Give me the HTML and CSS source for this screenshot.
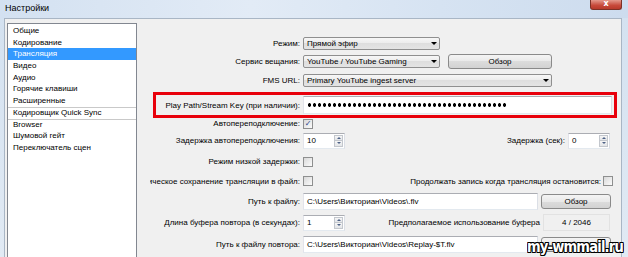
FILE: index.html
```html
<!DOCTYPE html>
<html lang="ru">
<head>
  <meta charset="UTF-8">
  <title>Настройки</title>
  <link rel="stylesheet" href="styles.css">
</head>
<body>
  <div class="window">
    <div class="titlebar">
      <span class="title">Настройки</span>
      <div class="close">x</div>
    </div>

    <div class="frame">
      <ul class="nav">
        <li>Общие</li>
        <li>Кодирование</li>
        <li class="active">Трансляция</li>
        <li>Видео</li>
        <li>Аудио</li>
        <li>Горячие клавиши</li>
        <li>Расширенные</li>
        <li class="sep">Кодировщик Quick Sync</li>
        <li class="sep">Browser</li>
        <li>Шумовой гейт</li>
        <li>Переключатель сцен</li>
      </ul>

      <div class="panel">
        <div class="row r1">
          <div class="lbl">Режим:</div>
          <div class="select s-short">Прямой эфир</div>
        </div>
        <div class="row r2">
          <div class="lbl">Сервис вещания:</div>
          <div class="select s-short">YouTube / YouTube Gaming</div>
          <div class="btn btn-wide">Обзор</div>
        </div>
        <div class="row r3">
          <div class="lbl">FMS URL:</div>
          <div class="select s-long">Primary YouTube ingest server</div>
        </div>
        <div class="row r4">
          <div class="keybox">
            <div class="lbl">Play Path/Stream Key (при наличии):</div>
            <div class="field key"><span class="dots"></span></div>
          </div>
        </div>
        <div class="row r5">
          <div class="lbl">Автопереподключение:</div>
          <div class="check checked">✓</div>
        </div>
        <div class="row r6">
          <div class="lbl">Задержка автопереподключения:</div>
          <div class="spin"><span class="val">10</span><span class="arrows"><i class="up"></i><i class="down"></i></span></div>
          <div class="fill">Задержка (сек):</div>
          <div class="spin spin-right"><span class="val">0</span><span class="arrows"><i class="up"></i><i class="down"></i></span></div>
        </div>
        <div class="row r7">
          <div class="lbl">Режим низкой задержки:</div>
          <div class="check"></div>
        </div>
        <div class="row r8">
          <div class="lbl lbl-cut">Автоматическое сохранение трансляции в файл:</div>
          <div class="check"></div>
          <div class="fill">Продолжать запись когда трансляция остановится:</div>
          <div class="check check-right"></div>
        </div>
        <div class="row r9">
          <div class="lbl">Путь к файлу:</div>
          <div class="field path">C:\Users\Викториан\Videos\.flv</div>
          <div class="btn btn-small">Обзор</div>
        </div>
        <div class="row r10">
          <div class="lbl">Длина буфера повтора (в секундах):</div>
          <div class="spin"><span class="val">1</span><span class="arrows"><i class="up"></i><i class="down"></i></span></div>
          <div class="fill">Предполагаемое использование буфера</div>
          <div class="usage">4 / 2046</div>
        </div>
        <div class="row r11">
          <div class="lbl">Путь к файлу повтора:</div>
          <div class="field path">C:\Users\Викториан\Videos\Replay-$T.flv</div>
          <div class="btn btn-small">Обзор</div>
        </div>
      </div>
    </div>

    <div class="watermark">my-wmmail.ru</div>
  </div>
</body>
</html>
```

FILE: styles.css
```css
body {
  margin: 0;
  font-family: "Liberation Sans", Arial, sans-serif;
  font-size: 8px;
  color: #000;
}

.window {
  position: relative;
  width: 628px;
  height: 257px;
  overflow: hidden;
  background: linear-gradient(#d3e1f0, #e1eaf4);
}

/* заголовок окна */
.titlebar {
  height: 18px;
  display: flex;
  justify-content: space-between;
  padding-left: 5px;
  background: linear-gradient(90deg, #d3e1f1, #e2ebf6 40%, #d6e3f2 70%, #cddcee);
}

.title {
  font-size: 9px;
  line-height: 16px;
}

.close {
  width: 32px;
  height: 10px;
  margin-right: 6px;
  box-sizing: border-box;
  border: 1px solid #7d3126;
  border-top: none;
  border-radius: 0 0 3px 3px;
  background: linear-gradient(#e4998c, #c7493a 60%, #b83a2b);
  color: #fff;
  font: bold 8px "DejaVu Sans", sans-serif;
  text-align: center;
  line-height: 8px;
}

.frame {
  display: flex;
  height: 239px;
  margin: 0 6px 0 4px;
  border: 1px solid #a9b6c5;
  border-bottom: none;
  background: #f0f0f0;
}

/* список разделов */
.nav {
  list-style: none;
  margin: 4px 0 0 2px;
  padding: 1px 0 0;
  width: 130px;
  box-sizing: border-box;
  border: 1px solid #828790;
  border-bottom: none;
  background: #fff;
}

.nav li {
  height: 11.7px;
  line-height: 11.7px;
  padding-left: 5px;
  box-sizing: border-box;
  white-space: nowrap;
}

.nav li.active {
  background: #3399ff;
  color: #fff;
}

.nav li.sep {
  border-top: 1px solid #c9c9c9;
  line-height: 10.7px;
}

/* правая часть */
.panel {
  flex: 1;
  display: flex;
  flex-direction: column;
  padding: 15px 0 0 11px;
}

.row {
  display: flex;
  align-items: center;
}

.r1 { height: 18px; }
.r2 { height: 19px; }
.r3 { height: 19px; }
.r4 { height: 28px; align-items: flex-start; }
.r5 { height: 11px; }
.r6 { height: 23px; }
.r7 { height: 19px; }
.r8 { height: 20px; }
.r9 { height: 21px; }
.r10 { height: 21px; }
.r11 { height: 22px; }

.lbl {
  width: 152px;
  flex-shrink: 0;
  display: flex;
  justify-content: flex-end;
  overflow: hidden;
  white-space: nowrap;
  margin-right: 3px;
}

.lbl-cut {
  width: 150px;
  margin-left: 2px;
}

.select {
  height: 13px;
  box-sizing: border-box;
  border: 1px solid #8f8f8f;
  border-radius: 2px;
  background: linear-gradient(#f7f7f7, #ebebeb 50%, #dedede 50%, #e4e4e4);
  padding-left: 3px;
  display: flex;
  align-items: center;
  justify-content: space-between;
  white-space: nowrap;
}

.select::after {
  content: "";
  border-left: 3px solid transparent;
  border-right: 3px solid transparent;
  border-top: 3px solid #000;
  margin-right: 2px;
}

.s-short { width: 137px; }
.s-long { width: 249px; }

.btn {
  height: 15px;
  box-sizing: border-box;
  border: 1px solid #8a8a8a;
  border-radius: 3px;
  background: linear-gradient(#f4f4f4, #e9e9e9 50%, #dcdcdc 50%, #d2d2d2);
  display: flex;
  align-items: center;
  justify-content: center;
}

.btn-wide {
  width: 104px;
  margin-left: 8px;
}

.btn-small {
  width: 70px;
  margin-left: 3px;
}

.field {
  height: 17px;
  box-sizing: border-box;
  border: 1px solid #abadb3;
  border-color: #abadb3 #dbdfe6 #e3e9ef #e2e3ea;
  background: #fff;
  padding-left: 3px;
  display: flex;
  align-items: center;
  white-space: nowrap;
}

.path { width: 235px; }

.keybox {
  margin: 2px 0 0 5px;
  width: 464px;
  height: 26px;
  box-sizing: border-box;
  border: 3px solid #e8000b;
  display: flex;
  align-items: center;
}

.keybox .lbl { width: 144px; }

.key {
  width: 309px;
  height: 18px;
}

.dots {
  width: 201px;
  height: 4px;
  background: radial-gradient(circle, #000 1.5px, transparent 2px) 0 0 / 5px 4px repeat-x;
}

.check {
  width: 10px;
  height: 10px;
  flex-shrink: 0;
  box-sizing: border-box;
  border: 1px solid #8e8f8f;
  background: linear-gradient(135deg, #d9d9d9, #fbfbfb);
  color: #27468a;
  font: bold 8px "DejaVu Sans", sans-serif;
  line-height: 8px;
  text-align: center;
}

.check-right { margin: 0 8px 0 2px; }

.spin {
  width: 42px;
  height: 16px;
  flex-shrink: 0;
  box-sizing: border-box;
  border: 1px solid #abadb3;
  border-color: #abadb3 #dbdfe6 #e3e9ef #e2e3ea;
  background: #fff;
  display: flex;
}

.spin .val {
  flex: 1;
  padding-left: 3px;
  line-height: 14px;
}

.spin .arrows {
  width: 9px;
  margin: 1px 1px 1px 0;
  display: flex;
  flex-direction: column;
}

.spin i {
  flex: 1;
  border: 1px solid #c3c7cd;
  background: linear-gradient(#f6f6f6, #e3e5e8);
  display: flex;
  align-items: center;
  justify-content: center;
}

.spin i + i { border-top: none; }

.spin i::after {
  content: "";
  border-left: 2px solid transparent;
  border-right: 2px solid transparent;
}

.spin .up::after { border-bottom: 2px solid #4d6185; }
.spin .down::after { border-top: 2px solid #4d6185; }

.spin-right { margin: 0 11px 0 3px; }

.fill {
  flex: 1;
  text-align: right;
  white-space: nowrap;
}

.usage {
  width: 67px;
  height: 17px;
  flex-shrink: 0;
  margin: 0 11px 0 3px;
  box-sizing: border-box;
  border: 1px solid #e2e2e2;
  background: #f0f0f0;
  display: flex;
  align-items: center;
  justify-content: center;
}

.watermark {
  position: absolute;
  left: 527px;
  top: 238px;
  white-space: nowrap;
  font: bold 16px "DejaVu Sans", sans-serif;
  line-height: 18px;
  letter-spacing: -1px;
  transform: scaleX(0.82);
  transform-origin: 0 0;
  color: #fff;
  text-shadow: 1px 0 #000, -1px 0 #000, 0 1px #000, 0 -1px #000,
    1px 1px #000, -1px -1px #000, 1px -1px #000, -1px 1px #000;
}
```
